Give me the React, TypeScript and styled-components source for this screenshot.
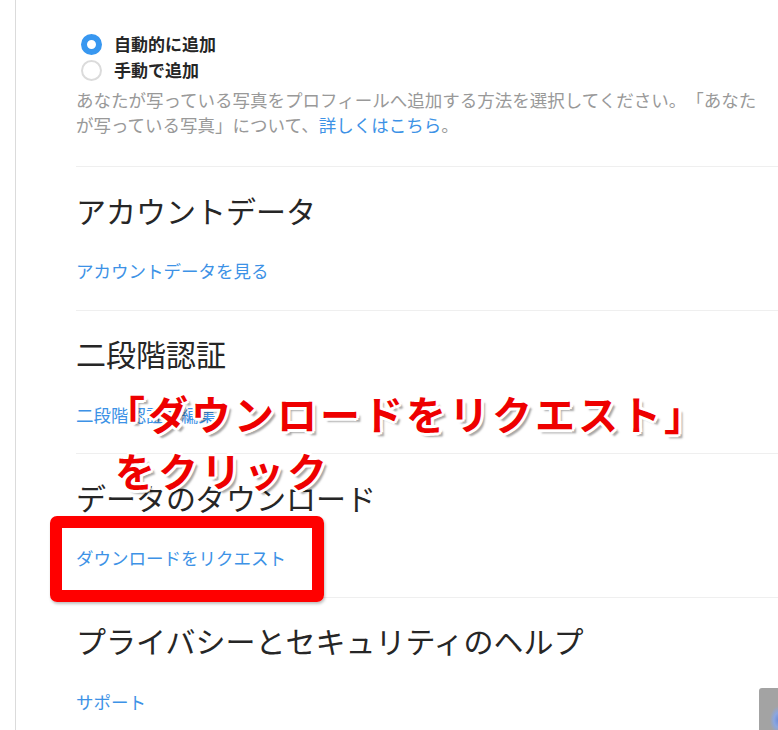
import React from 'react'
import styled, {createGlobalStyle} from 'styled-components'

const GlobalStyle = createGlobalStyle`
  html, body {
    margin: 0;
    padding: 0;
    background: #fff;
    overflow: hidden;
  }
  body {
    font-family: "Noto Sans CJK JP", "Noto Sans", sans-serif;
    color: #262626;
    text-spacing-trim: space-all;
  }
`

const Page = styled.div`
  position: relative;
  display: flex;
  width: 778px;
  height: 730px;
  overflow: hidden;
`

const Rail = styled.div`
  flex: none;
  width: 15px;
  border-right: 1px solid #dbdbdb;
`

const Content = styled.main`
  flex: none;
  width: 760px;
  padding: 31px 0 0 60px;
`

const RadioGroup = styled.div`
  display: flex;
  flex-direction: column;
`

const RadioRow = styled.label`
  display: flex;
  align-items: center;
  gap: 12px;
  height: 26px;
  font-size: 17px;
  font-weight: 700;
  line-height: 26px;
  color: #262626;
`

const RadioDot = styled.span<{$checked?: boolean}>`
  flex: none;
  box-sizing: border-box;
  width: 21px;
  height: 21px;
  margin-left: 5px;
  border-radius: 50%;
  background: #fff;
  border: ${(p) => (p.$checked ? '6px solid #3897f0' : '2.5px solid #dbdbdb')};
`

const Description = styled.p`
  max-width: 690px;
  margin: 4px 0 0;
  font-size: 17.5px;
  line-height: 25px;
  color: #999;
  text-spacing-trim: space-all;
`

const InlineLink = styled.a`
  color: #3d92e6;
  text-decoration: none;
`

const SectionList = styled.div`
  margin-top: 29px;
`

const Section = styled.section`
  border-top: 1px solid #efefef;
  padding: 24.5px 0 27.5px;
`

const SectionTitle = styled.h2`
  margin: 0;
  font-size: 30px;
  font-weight: 400;
  line-height: 36px;
  color: #262626;
`

const SectionLink = styled.a`
  display: block;
  margin-top: 32.5px;
  font-size: 17.5px;
  line-height: 22px;
  color: #3d92e6;
  text-decoration: none;
`

const Callout = styled.div`
  position: absolute;
  left: 0;
  top: 385px;
  font-size: 40px;
  font-weight: 700;
  line-height: 57px;
  letter-spacing: 3px;
  color: #ee0000;
  white-space: nowrap;
  text-spacing-trim: space-all;
  text-shadow:
    -3px 0 0 #fff, 3px 0 0 #fff, 0 -3px 0 #fff, 0 3px 0 #fff,
    -2px -2px 0 #fff, 2px -2px 0 #fff, -2px 2px 0 #fff, 2px 2px 0 #fff,
    4px 4px 2px rgba(0, 0, 0, 0.35);
`

const CalloutLine = styled.div<{$indent: number}>`
  padding-left: ${(p) => p.$indent}px;
`

const Highlight = styled.div`
  position: absolute;
  left: 50px;
  top: 516px;
  width: 274px;
  height: 86px;
  box-sizing: border-box;
  border: 12px solid #ff0000;
  border-radius: 7px;
  box-shadow: 1px 2px 3px rgba(0, 0, 0, 0.25);
`

const CornerWidget = styled.div`
  position: absolute;
  left: 759px;
  top: 688px;
  width: 30px;
  height: 50px;
  border-radius: 3px 0 0 0;
  background:
    radial-gradient(ellipse 8px 14px at 19px 32px, #6f8fd8 0%, #8aa6e0 50%, rgba(163, 163, 163, 0) 100%),
    #a3a3a3;
`

const sections = [
  {title: 'アカウントデータ', link: 'アカウントデータを見る'},
  {title: '二段階認証', link: '二段階認証を編集'},
  {title: 'データのダウンロード', link: 'ダウンロードをリクエスト'},
  {title: 'プライバシーとセキュリティのヘルプ', link: 'サポート'},
]

export default function App() {
  return (
    <>
      <GlobalStyle />
      <Page>
        <Rail />
        <Content>
          <RadioGroup>
            <RadioRow>
              <RadioDot $checked />
              自動的に追加
            </RadioRow>
            <RadioRow>
              <RadioDot />
              手動で追加
            </RadioRow>
          </RadioGroup>
          <Description>
            あなたが写っている写真をプロフィールへ追加する方法を選択してください。「あなたが写っている写真」について、
            <InlineLink href="#">詳しくはこちら</InlineLink>。
          </Description>
          <SectionList>
            {sections.map((s) => (
              <Section key={s.title}>
                <SectionTitle>{s.title}</SectionTitle>
                <SectionLink href="#">{s.link}</SectionLink>
              </Section>
            ))}
          </SectionList>
        </Content>
        <Callout>
          <CalloutLine $indent={105}>「ダウンロードをリクエスト」</CalloutLine>
          <CalloutLine $indent={115}>をクリック</CalloutLine>
        </Callout>
        <Highlight />
        <CornerWidget />
      </Page>
    </>
  )
}
